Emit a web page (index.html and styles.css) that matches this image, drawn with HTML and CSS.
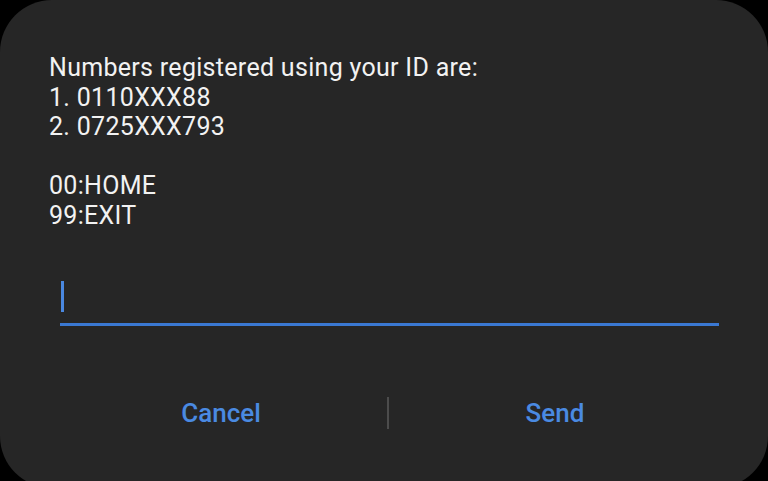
FILE: index.html
```html
<!DOCTYPE html>
<html lang="en">
<head>
    <meta charset="UTF-8">
    <meta name="viewport" content="width=device-width, initial-scale=1.0">
    <title>USSD</title>
    <link rel="stylesheet" href="styles.css">
</head>
<body>
    <div class="dialog">
        <div class="message">
            <p>Numbers registered using your ID are:</p>
            <p>1. 0110XXX88</p>
            <p>2. 0725XXX793</p>
            <p>&nbsp;</p>
            <p>00:HOME</p>
            <p>99:EXIT</p>
        </div>

        <div class="field">
            <span class="cursor"></span>
        </div>

        <div class="actions">
            <button class="action">Cancel</button>
            <span class="divider"></span>
            <button class="action">Send</button>
        </div>
    </div>
</body>
</html>
```

FILE: styles.css
```css
body {
    margin: 0;
    background-color: #000;
    font-family: Roboto, "Liberation Sans", sans-serif;
    overflow: hidden;
}
.dialog {
    height: 488px;
    background-color: #262626;
    border-radius: 52px;
    padding: 53px 47px 0 49px;
    box-sizing: border-box;
    display: flex;
    flex-direction: column;
}
.message {
    color: #f2f2f2;
    font-size: 25px;
    letter-spacing: 0.3px;
    line-height: 29.5px;
}
.message p {
    margin: 0;
}
.field {
    margin: 51px 2px 0 11px;
    height: 42px;
    border-bottom: 3px solid #3a78d2;
}
.cursor {
    display: block;
    width: 3px;
    height: 31px;
    background-color: #4a88e0;
    margin-left: 1px;
}
.actions {
    display: flex;
    align-items: center;
    margin: 70px 0 0 6px;
}
.action {
    flex: 1;
    background: none;
    border: none;
    padding: 0;
    font-family: Roboto, "Liberation Sans", sans-serif;
    font-size: 26px;
    font-weight: 500;
    color: #4a8ae2;
    line-height: 34px;
}
.divider {
    width: 2px;
    height: 32px;
    background-color: #4c4c4c;
}
```
